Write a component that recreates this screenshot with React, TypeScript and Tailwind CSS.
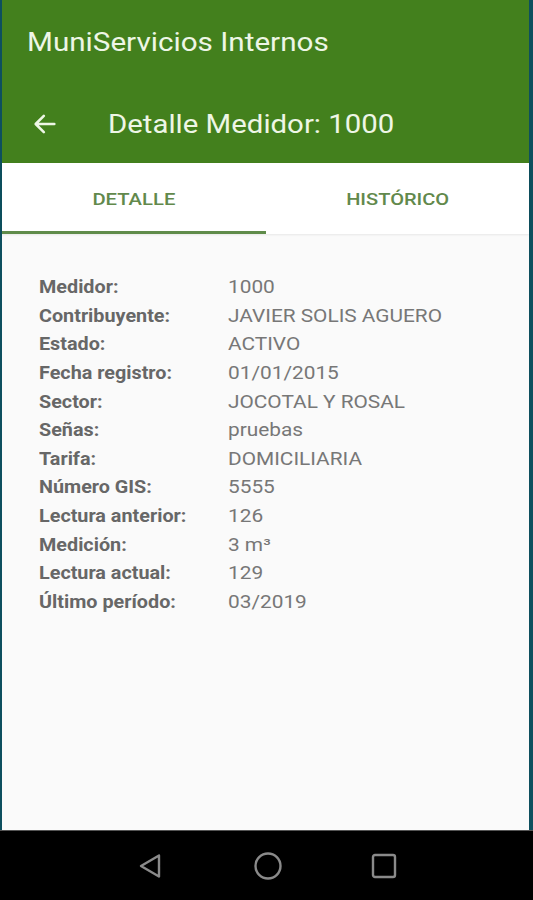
import React from "react";

const rows: [string, string][] = [
  ["Medidor:", "1000"],
  ["Contribuyente:", "JAVIER SOLIS AGUERO"],
  ["Estado:", "ACTIVO"],
  ["Fecha registro:", "01/01/2015"],
  ["Sector:", "JOCOTAL Y ROSAL"],
  ["Señas:", "pruebas"],
  ["Tarifa:", "DOMICILIARIA"],
  ["Número GIS:", "5555"],
  ["Lectura anterior:", "126"],
  ["Medición:", "3 m³"],
  ["Lectura actual:", "129"],
  ["Último período:", "03/2019"],
];

export default function App(): React.JSX.Element {
  return (
    <div
      className="w-[533px] h-[900px] flex flex-col bg-[#0d4f5e] pl-[2px] pr-[4px] overflow-hidden"
      style={{ fontFamily: "Roboto, 'Noto Sans', sans-serif" }}
    >
      <div className="flex flex-col flex-1 bg-[#fafafa]">
        {/* app bar */}
        <div className="bg-[#43801d] h-[163px] flex flex-col text-[#eef6e6]">
          <div className="h-[84px] flex items-center pl-[25px] text-[26px] leading-none">
            <span className="inline-block origin-left scale-x-[1.14]">MuniServicios Internos</span>
          </div>
          <div className="h-[79px] flex items-center">
            <svg
              className="ml-[29px] w-[28px] h-[28px]"
              viewBox="0 0 24 24"
              fill="none"
              stroke="currentColor"
              strokeWidth={2.2}
              strokeLinecap="round"
              strokeLinejoin="round"
            >
              <path d="M20 12H5M11 5l-7 7 7 7" />
            </svg>
            <div className="ml-[49px] text-[26px] leading-none">
              <span className="inline-block origin-left scale-x-[1.13]">Detalle Medidor: 1000</span>
            </div>
          </div>
        </div>

        {/* tabs */}
        <div className="bg-white h-[71px] flex shadow-[0_1px_2px_rgba(0,0,0,0.08)]">
          <div className="w-[264px] flex flex-col">
            <div className="flex-1 flex items-center justify-center pt-[6px] text-[17px] font-medium text-[#62894c]">
              <span className="inline-block scale-x-[1.19]">DETALLE</span>
            </div>
            <div className="h-[3px] bg-[#5f8b4a]" />
          </div>
          <div className="flex-1 flex flex-col">
            <div className="flex-1 flex items-center justify-center pt-[6px] text-[17px] font-medium text-[#62894c]">
              <span className="inline-block scale-x-[1.18]">HISTÓRICO</span>
            </div>
            <div className="h-[3px]" />
          </div>
        </div>

        {/* detail */}
        <div className="flex-1 pt-[39px] pl-[37px]">
          {rows.map(([label, value]) => (
            <div key={label} className="flex h-[28.6px] items-center text-[17.5px]">
              <div className="w-[189px] font-bold text-[#676767]">
                <span className="inline-block origin-left scale-x-[1.13]">{label}</span>
              </div>
              <div className="text-[#777777]">
                <span className="inline-block origin-left scale-x-[1.19]">{value}</span>
              </div>
            </div>
          ))}
        </div>
      </div>

      {/* nav bar */}
      <div className="h-[70px] bg-black -ml-[2px] -mr-[4px] flex items-center justify-center gap-[88px] text-[#8a8a8a] border-t border-[#555]">
        <svg width="28" height="28" viewBox="0 0 28 28" fill="none" stroke="currentColor" strokeWidth={2.4} strokeLinejoin="round">
          <path d="M22 3.5L4 14L22 24.5Z" />
        </svg>
        <svg width="30" height="30" viewBox="0 0 30 30" fill="none" stroke="currentColor" strokeWidth={2.4}>
          <circle cx="15" cy="15" r="12.5" />
        </svg>
        <svg width="26" height="26" viewBox="0 0 26 26" fill="none" stroke="currentColor" strokeWidth={2.4}>
          <rect x="2" y="2" width="22" height="22" rx="2" />
        </svg>
      </div>
    </div>
  );
}
